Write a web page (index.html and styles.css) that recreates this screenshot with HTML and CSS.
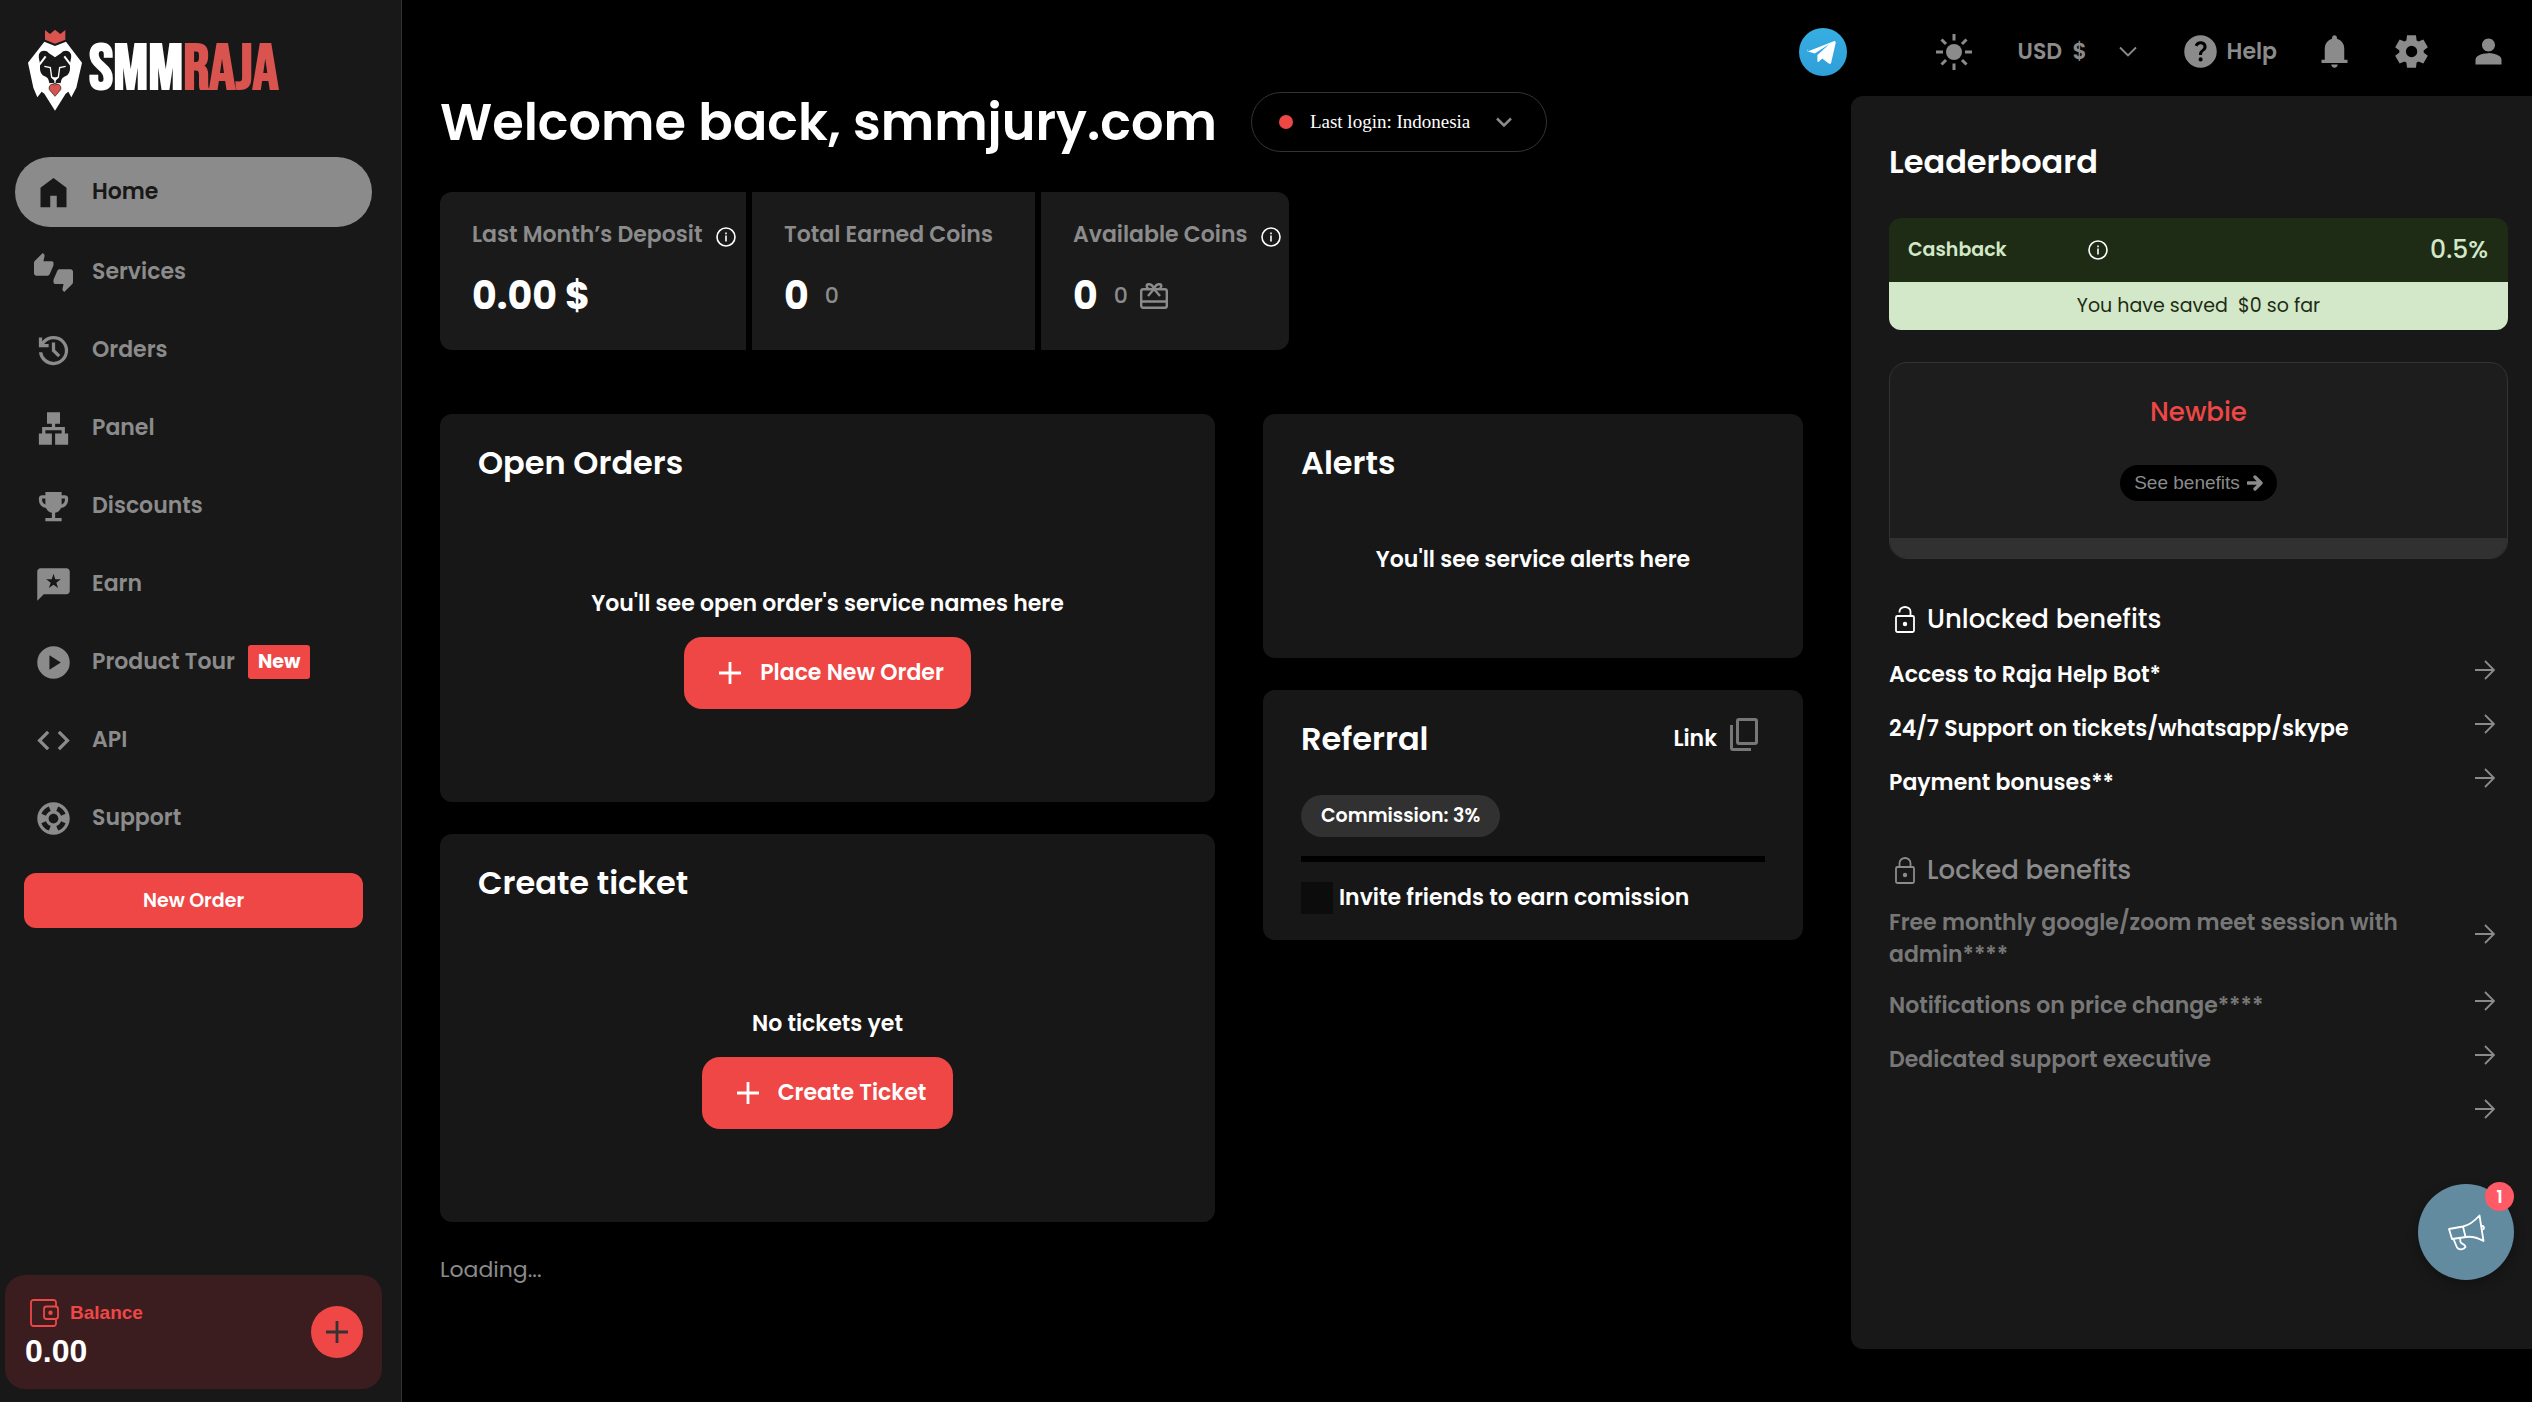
FILE: index.html
```
<!DOCTYPE html>
<html lang="en">
<head>
<meta charset="utf-8">
<title>SMMRAJA</title>
<link rel="stylesheet" href="styles.css">
</head>
<body>
<svg class="sprite" aria-hidden="true">
  <symbol id="info" viewBox="0 0 20 20"><circle cx="10" cy="10" r="9" fill="none" stroke="currentColor" stroke-width="1.6"/><path d="M9.200 8.500h1.600v6H9.200zM9.200 5.500h1.600v1.700H9.200z" fill="currentColor"/></symbol>
  <symbol id="chevron" viewBox="0 0 18 12"><path d="M1 1.500l8 8 8-8" fill="none" stroke="currentColor" stroke-width="1.800"/></symbol>
  <symbol id="plus" viewBox="0 0 24 24"><path d="M12 1v22M1 12h22" stroke="currentColor" stroke-width="2.800" fill="none"/></symbol>
  <symbol id="arrow" viewBox="0 0 20 20"><path d="M0 10h18.500M10 1l9 9-9 9" stroke="currentColor" stroke-width="1.800" fill="none"/></symbol>
</svg>
<div class="app">
  <aside class="sidebar">
    <a class="logo" href="#">
      <svg class="lion" viewBox="84 87 162 244" aria-hidden="true">
        <path fill="#d9534f" d="M135 89l15 12 15-13 16 13 15-12v29l-31 12-30-12z"/>
        <path fill="#fff" d="M133 124l32 13 33-13 48 63-17 75-15 29-9-17-8 6-32 51-32-51-8-6-13 17-12-29-16-75z"/>
        <path fill="#181818" d="M117 162c5-14 23-13 29-4l19 13 19-13c6-9 24-10 29 4 3 14-5 24-3 38 1 15-6 25-14 28-10 4-12 10-14 21-6-2-14-2-17 4-3-6-11-6-17-4-2-11-4-17-14-21-8-3-15-13-14-28 2-14-6-24-3-38z"/>
        <path fill="none" stroke="#fff" stroke-width="6" d="M137 168l-18 24M193 168l18 24"/>
        <path fill="none" stroke="#fff" stroke-width="4" d="M133 198l18 4 4 28 10 7 10-7 4-28 18-4M165 237v12"/>
        <path fill="#fff" d="M153 231h24l-12 12z"/>
        <path fill="#d9534f" stroke="#181818" stroke-width="2" d="M165 288l-17-20c-4-13 10-22 17-13 7-9 21 0 17 13z"/>
      </svg>
      <span class="wordmark">SMM<span class="raja">RAJA</span></span>
    </a>
    <nav class="nav">
      <a class="item active" href="#"><svg class="icon" viewBox="0 0 24 24"><path d="M4 21V9l8-6 8 6v12h-6v-7h-4v7z"/></svg>Home</a>
      <a class="item" href="#"><svg class="icon" viewBox="0 0 24 24"><path d="M12 6c0-.55-.45-1-1-1H5.820l.66-3.180.02-.23c0-.31-.13-.59-.33-.8L5.380 0 .44 4.940C.17 5.210 0 5.590 0 6v6.500c0 .83.67 1.500 1.500 1.500h6.750c.62 0 1.150-.38 1.380-.91l2.260-5.290c.07-.17.11-.36.11-.55V6zm10.500 4h-6.750c-.62 0-1.150.38-1.380.91l-2.260 5.290c-.07.17-.11.36-.11.55V18c0 .55.45 1 1 1h5.180l-.66 3.180-.02.24c0 .31.13.59.33.8l.79.78 4.940-4.940c.27-.27.44-.65.44-1.060v-6.500c0-.83-.67-1.500-1.500-1.500z"/></svg>Services</a>
      <a class="item" href="#"><svg class="icon" viewBox="0 0 24 24"><path d="M12 21q-3.450 0-6.012-2.287T3.050 13H5.100q.35 2.600 2.313 4.300T12 19q2.925 0 4.963-2.037T19 12t-2.037-4.962T12 5q-1.725 0-3.225.8T6.250 8H9v2H3V4h2v2.350q1.275-1.600 3.113-2.475T12 3q1.875 0 3.513.713t2.850 1.924t1.925 2.850T21 12t-.712 3.513t-1.925 2.850t-2.850 1.925T12 21m2.800-4.800L11 12.400V7h2v4.600l3.200 3.200z"/></svg>Orders</a>
      <a class="item" href="#"><svg class="icon" viewBox="0 0 24 24"><path d="M8 2h8v7h-3v2h6v4h2v7h-8v-7h4v-2H7v2h4v7H3v-7h2v-4h6V9H8z"/></svg>Panel</a>
      <a class="item" href="#"><svg class="icon" viewBox="0 0 24 24"><path fill-rule="evenodd" d="M7 21v-2h4v-3.100q-1.225-.275-2.187-1.037T7.400 12.950q-1.875-.225-3.137-1.637T3 8V7q0-.825.588-1.412T5 5h2V3h10v2h2q.825 0 1.413.588T21 7v1q0 1.900-1.263 3.313T16.600 12.950q-.45 1.150-1.412 1.913T13 15.900V19h4v2zm0-10.200V7H5v1q0 .95.55 1.713T7 10.800m10 0q.9-.325 1.450-1.088T19 8V7h-2z"/></svg>Discounts</a>
      <a class="item" href="#"><svg class="icon" viewBox="0 0 24 24"><path fill-rule="evenodd" d="M20 2H4c-1.100 0-2 .9-2 2v18l4-4h14c1.100 0 2-.9 2-2V4c0-1.100-.9-2-2-2zm-5.200 12.200L12 12.100l-2.800 2.100 1.050-3.350L7.500 8.700h3.400L12 5.400l1.100 3.300h3.400l-2.750 2.150z"/></svg>Earn</a>
      <a class="item" href="#"><svg class="icon" viewBox="0 0 24 24"><path fill-rule="evenodd" d="M12 2a10 10 0 1 0 0 20 10 10 0 0 0 0-20zM9.500 16.500v-9l7 4.500z"/></svg>Product Tour<span class="new">New</span></a>
      <a class="item" href="#"><svg class="icon" viewBox="0 0 24 24"><path d="M9.400 16.600 4.800 12l4.600-4.600L8 6l-6 6 6 6zm5.200 0 4.600-4.600-4.600-4.600L16 6l6 6-6 6z"/></svg>API</a>
      <a class="item" href="#"><svg class="icon" viewBox="0 0 24 24"><path fill-rule="evenodd" d="M12 2C6.480 2 2 6.480 2 12s4.480 10 10 10 10-4.480 10-10S17.520 2 12 2zm7.460 7.120-2.780 1.150c-.51-1.360-1.580-2.440-2.950-2.940l1.150-2.780c2.100.8 3.770 2.470 4.580 4.570zM12 15c-1.660 0-3-1.340-3-3s1.340-3 3-3 3 1.340 3 3-1.340 3-3 3zM9.130 4.540l1.170 2.780c-1.380.5-2.470 1.590-2.980 2.970L4.540 9.130c.81-2.110 2.480-3.780 4.590-4.590zM4.540 14.870l2.780-1.150c.51 1.380 1.590 2.460 2.970 2.960l-1.170 2.780c-2.100-.81-3.770-2.480-4.580-4.590zm10.340 4.590-1.150-2.780c1.370-.51 2.450-1.590 2.950-2.970l2.780 1.170c-.81 2.100-2.480 3.770-4.580 4.580z"/></svg>Support</a>
    </nav>
    <button class="btn side-order" type="button">New Order</button>
    <section class="balance">
      <div>
        <div class="balance-label"><svg class="wallet" viewBox="0 0 29 28"><path d="M26 7V3.500A2.500 2.500 0 0 0 23.500 1h-20A2.500 2.500 0 0 0 1 3.500v21A2.500 2.500 0 0 0 3.500 27h20a2.500 2.500 0 0 0 2.500-2.500V20M16.500 7.500h9a2.500 2.500 0 0 1 2.500 2.500v7.500a2.500 2.500 0 0 1-2.500 2.500h-9a2.500 2.500 0 0 1-2.500-2.500V10a2.500 2.500 0 0 1 2.500-2.500z" fill="none" stroke="currentColor" stroke-width="1.800"/><circle cx="20.500" cy="13.700" r="2.200" fill="currentColor"/></svg>Balance</div>
        <div class="balance-value">0.00</div>
      </div>
      <button class="add" type="button" aria-label="Add funds"><svg class="add-icon"><use href="#plus"/></svg></button>
    </section>
  </aside>
  <div class="page">
    <header class="topbar">
      <a class="telegram" href="#" aria-label="Telegram"><svg viewBox="0 0 24 24"><path fill="#fff" d="M4.300 11.700l13.100-5.100c.6-.2 1.100.2.900 1l-2.200 9.700c-.15.7-.6.8-1.200.5L11.600 15.300l-1.600 1.500c-.4.4-.8.2-.8-.3v-3l6-5.500-7.300 4.700-3.400-1c-.6-.2-.6-.6-.2-1z"/></svg></a>
      <button class="tool sun" type="button" aria-label="Theme"><svg viewBox="0 0 36 36" class="sun-icon"><circle cx="18" cy="18" r="8" fill="currentColor"/><path d="M18 0v6.500M18 29.500V36M0 18h7M29 18h7M5.500 5.500l4.500 4.500M26 26l4.500 4.500M5.500 30.500L10 26M26 10l4.500-4.500" stroke="currentColor" stroke-width="3" fill="none"/></svg></button>
      <label class="currency"><select aria-label="Currency"><option>USD&nbsp; $</option></select><svg class="chev"><use href="#chevron"/></svg></label>
      <a class="help" href="#"><svg class="icon" viewBox="0 0 24 24"><path fill-rule="evenodd" d="M12 2a10 10 0 1 0 0 20 10 10 0 0 0 0-20zm.07 16.100a1.250 1.250 0 1 1 0-2.500 1.250 1.250 0 0 1 0 2.500zm.9-3.900h-1.900c0-1.700.3-2.200 1.500-3.250.9-.8 1.250-1.150 1.250-1.900 0-.9-.7-1.550-1.750-1.550-1 0-1.650.6-1.950 1.400l-1.700-.7C8.950 6.700 10.300 5.700 12.050 5.700c2.200 0 3.700 1.350 3.700 3.300 0 1.150-.55 1.900-1.500 2.750-1.050.95-1.280 1.300-1.280 2.450z"/></svg>Help</a>
      <button class="tool" type="button" aria-label="Notifications"><svg class="icon" viewBox="0 0 24 24"><path d="M4 19v-2h2v-7q0-2.075 1.250-3.687T10.500 4.200v-.7q0-.625.438-1.062T12 2t1.063.438T13.500 3.500v.7q2 .5 3.250 2.113T18 10v7h2v2zm8 3q-.825 0-1.412-.587T10 20h4q0 .825-.587 1.413T12 22"/></svg></button>
      <button class="tool" type="button" aria-label="Settings"><svg class="icon" viewBox="0 0 24 24"><path fill-rule="evenodd" d="M9.250 22l-.4-3.200q-.325-.125-.612-.3t-.563-.375L4.700 19.375l-2.750-4.750 2.575-1.950Q4.500 12.500 4.500 12.338v-.675q0-.163.025-.338L1.950 9.375l2.750-4.750 2.975 1.250q.275-.2.575-.375t.6-.3l.4-3.200h5.500l.4 3.200q.325.125.613.3t.562.375l2.975-1.250 2.750 4.750-2.575 1.950q.025.175.025.338v.674q0 .163-.05.338l2.575 1.950-2.750 4.750-2.950-1.250q-.275.2-.575.375t-.6.3l-.4 3.200zm2.800-6.500q1.450 0 2.475-1.025T15.550 12t-1.025-2.475T12.050 8.500q-1.475 0-2.488 1.025T8.550 12t1.013 2.475T12.050 15.500"/></svg></button>
      <button class="tool" type="button" aria-label="Account"><svg class="icon" viewBox="0 0 24 24"><path d="M12 12c2.210 0 4-1.790 4-4s-1.790-4-4-4-4 1.790-4 4 1.790 4 4 4zM4 20v-2.800q0-.85.438-1.562T5.600 14.550q1.550-.775 3.150-1.162T12 13t3.250.388 3.150 1.162q.725.375 1.163 1.088T20 17.200V20z"/></svg></button>
    </header>
    <main class="content">
      <div class="welcome">
        <h1>Welcome back, smmjury.com</h1>
        <button class="login" type="button"><span class="dot"></span>Last login: Indonesia<svg class="chev-bold" viewBox="0 0 16 11"><path d="M1 1.500l7 7 7-7" fill="none" stroke="currentColor" stroke-width="2.500"/></svg></button>
      </div>
      <div class="stats">
        <section class="stat deposit"><div class="stat-label">Last Month’s Deposit<svg class="info"><use href="#info"/></svg></div><div class="stat-value">0.00 $</div></section>
        <section class="stat earned"><div class="stat-label">Total Earned Coins</div><div class="stat-value">0<span class="minor">0</span></div></section>
        <section class="stat available"><div class="stat-label">Available Coins<svg class="info"><use href="#info"/></svg></div><div class="stat-value">0<span class="minor">0</span><svg class="gift" viewBox="0 0 28 26"><rect x="1.200" y="6.200" width="25.600" height="18.600" rx="2" fill="none" stroke="currentColor" stroke-width="2.400"/><path d="M1 18.500h26M8 13l6-7 6 7M14 6c-1-3-3-5-5.500-4.800S6 5 9 6M14 6c1-3 3-5 5.500-4.800S22 5 19 6" fill="none" stroke="currentColor" stroke-width="2.400"/></svg></div></section>
      </div>
      <div class="cards">
        <div class="column">
          <section class="card"><h2>Open Orders</h2><div class="empty tall"><p>You'll see open order's service names here</p><button class="btn big" type="button"><svg class="plus"><use href="#plus"/></svg>Place New Order</button></div></section>
          <section class="card"><h2>Create ticket</h2><div class="empty tall"><p>No tickets yet</p><button class="btn big" type="button"><svg class="plus"><use href="#plus"/></svg>Create Ticket</button></div></section>
        </div>
        <div class="column">
          <section class="card"><h2>Alerts</h2><div class="empty short"><p>You'll see service alerts here</p></div></section>
          <section class="card referral">
            <div class="card-head"><h2>Referral</h2><button class="copy" type="button">Link<svg class="copy-icon" viewBox="0 0 28 33"><rect x="7.500" y="1.500" width="19" height="24" rx="1.500" fill="none" stroke="currentColor" stroke-width="3"/><path d="M1.500 7v23a1.500 1.500 0 0 0 1.500 1.500h18" fill="none" stroke="currentColor" stroke-width="3"/></svg></button></div>
            <span class="chip">Commission: 3%</span>
            <div class="track"></div>
            <div class="invite"><span class="swatch"></span>Invite friends to earn comission</div>
          </section>
        </div>
      </div>
      <p class="loading">Loading...</p>
    </main>
    <aside class="panel">
      <h2>Leaderboard</h2>
      <section class="cashback">
        <div class="cash-top"><span class="cash-label">Cashback</span><svg class="info"><use href="#info"/></svg><span class="cash-rate">0.5%</span></div>
        <div class="cash-saved">You have saved&nbsp; $0 so far</div>
      </section>
      <section class="rank">
        <h3>Newbie</h3>
        <a class="benefits" href="#">See benefits<svg class="bold-arrow" viewBox="0 0 16 16"><path d="M1 8h12M8 2l6 6-6 6" fill="none" stroke="currentColor" stroke-width="3.400" stroke-linecap="round" stroke-linejoin="round"/></svg></a>
        <div class="progress"></div>
      </section>
      <h3 class="list-title"><svg class="lock" viewBox="0 0 20 27"><rect x="1" y="10" width="18" height="16" rx="1.500" fill="none" stroke="currentColor" stroke-width="1.800"/><path d="M4.500 6.500V5.500a5.500 4.500 0 0 1 11 0V10" fill="none" stroke="currentColor" stroke-width="1.800"/><circle cx="10" cy="18" r="2.200" fill="currentColor"/></svg>Unlocked benefits</h3>
      <ul class="list">
        <li><a href="#">Access to Raja Help Bot*<svg class="arrow"><use href="#arrow"/></svg></a></li>
        <li><a href="#">24/7 Support on tickets/whatsapp/skype<svg class="arrow"><use href="#arrow"/></svg></a></li>
        <li><a href="#">Payment bonuses**<svg class="arrow"><use href="#arrow"/></svg></a></li>
      </ul>
      <h3 class="list-title locked-title"><svg class="lock" viewBox="0 0 20 27"><rect x="1" y="10" width="18" height="16" rx="1.500" fill="none" stroke="currentColor" stroke-width="1.800"/><path d="M4.500 10V6a5.500 5 0 0 1 11 0v4" fill="none" stroke="currentColor" stroke-width="1.800"/><circle cx="10" cy="18" r="2.200" fill="currentColor"/></svg>Locked benefits</h3>
      <ul class="list locked">
        <li><a href="#"><span>Free monthly google/zoom meet session with admin****</span><svg class="arrow"><use href="#arrow"/></svg></a></li>
        <li><a href="#">Notifications on price change****<svg class="arrow"><use href="#arrow"/></svg></a></li>
        <li><a href="#">Dedicated support executive<svg class="arrow"><use href="#arrow"/></svg></a></li>
        <li><a href="#" aria-label="More"><span></span><svg class="arrow"><use href="#arrow"/></svg></a></li>
      </ul>
    </aside>
  </div>
</div>
<button class="chat" type="button" aria-label="Announcements"><svg class="horn" viewBox="0 0 38 37"><path d="M2 15l14-2.500C23 11 28 6.500 32.500 1.500L36.500 27c-5.500-3-11-5-17.500-4L5 25zM16 12.500l2.500 10.500M6.500 25l3.500 8.500c2 3 7 2 8.500-.5 0-3-4-2.500-5-5l-.5-4M35 12c2.500 0 2.500 3 .7 3.500" fill="none" stroke="#fff" stroke-width="1.800" stroke-linejoin="round"/></svg><span class="count">1</span></button>
</body>
</html>
```
FILE: styles.css
```
* { box-sizing: border-box; }
body {
  margin: 0;
  background: #000;
  color: #fff;
  font-family: Poppins, Inter, sans-serif;
  font-size: 22px;
  font-weight: 600;
  line-height: 32px;
}
h1, h2, h3, p, ul { margin: 0; padding: 0; }
ul { list-style: none; }
a { color: inherit; text-decoration: none; }
button, select { font: inherit; color: inherit; background: none; border: 0; padding: 0; }
svg { display: block; flex: none; }
.sprite { position: absolute; width: 0; height: 0; }
.icon { width: 39px; height: 39px; fill: currentColor; }
.app { display: grid; grid-template-columns: 402px minmax(0, 1fr); min-height: 100vh; }

.sidebar { display: flex; flex-direction: column; background: #181818; border-right: 1px solid #333; }
.logo { display: flex; align-items: center; gap: 7px; height: 111px; padding: 29px 28px 0; }
.lion { width: 54px; height: 82px; }
.wordmark { font-family: "Bebas Neue", Oswald, "Liberation Sans", sans-serif; font-weight: 700; font-size: 65px; }
.raja { color: #d9534f; }
.nav { display: flex; flex-direction: column; gap: 8px; padding: 46px 18px 0 15px; color: #8b8b8b; }
.item { display: flex; align-items: center; height: 70px; padding-left: 19px; border-radius: 35px; }
.item .icon { margin-right: 19px; }
.item.active { margin: 0 11px 2px 0; background: #8b8b8b; color: #181818; }
.new { margin-left: 13px; padding: 0 10px; border-radius: 3px; background: #ee4745; color: #fff; font-size: 19px; font-weight: 700; line-height: 34px; }
.btn { background: #ee4745; color: #fff; }
.side-order { margin: 20px 38px 0 24px; height: 55px; border-radius: 12px; font-size: 19px; }
.balance { display: flex; align-items: center; justify-content: space-between; margin: auto 19px 13px 5px; height: 114px; padding: 0 19px 0 20px; border-radius: 20px; background: #3b1d1f; font-family: "Liberation Sans", Arial, sans-serif; font-weight: 700; }
.balance-label { display: flex; align-items: center; gap: 11px; padding: 6px 0 0 5px; color: #ee4745; font-size: 19px; }
.wallet { width: 29px; height: 28px; }
.balance-value { font-size: 32px; line-height: 44px; }
.add { display: grid; place-items: center; width: 52px; height: 52px; border-radius: 50%; background: #ee4745; color: #333; }
.add-icon { width: 24px; height: 24px; }

.page { display: grid; grid-template-columns: minmax(0, 1fr) 681px; grid-template-rows: 92px 1fr; }
.topbar { grid-column: 1 / -1; display: flex; align-items: center; justify-content: flex-end; padding: 0 24px 0 0; height: 103px; color: #8b8b8b; }
.telegram { width: 48px; height: 48px; margin-right: 89px; border-radius: 50%; background: linear-gradient(#37aee2, #2f9fd9); }
.tool { margin-left: 38px; }
.tool.sun { margin-left: 0; }
.sun-icon { width: 36px; height: 36px; }
.currency { display: flex; align-items: center; gap: 31px; margin: 0 44px 0 46px; }
.currency select { appearance: none; outline: 0; }
.chev { width: 18px; height: 12px; color: #8b8b8b; }
.help { display: flex; align-items: center; gap: 7px; }

.content { padding: 0 48px 0 38px; }
.welcome { display: flex; align-items: center; gap: 34px; height: 60px; }
h1 { font-size: 51px; font-weight: 600; line-height: 58px; white-space: nowrap; }
.login { display: flex; align-items: center; height: 60px; padding: 0 34px 0 27px; border: 1px solid #333; border-radius: 30px; font-family: "Liberation Serif", serif; font-size: 19px; font-weight: 400; white-space: nowrap; }
.dot { width: 14px; height: 14px; margin-right: 17px; border-radius: 50%; background: #ee4745; }
.chev-bold { width: 16px; height: 11px; margin-left: 26px; color: #8b8b8b; }
.stats { display: flex; gap: 6px; margin-top: 40px; }
.stat { height: 158px; padding: 27px 0 0 32px; background: #1a1a1a; }
.deposit { width: 306px; border-radius: 12px 0 0 12px; }
.earned { width: 283px; }
.available { width: 248px; border-radius: 0 12px 12px 0; }
.stat-label { display: flex; align-items: center; gap: 14px; color: #8b8b8b; white-space: nowrap; }
.info { width: 20px; height: 20px; color: #fff; }
.stat-label .info { margin-top: 4px; }
.stat-value { display: flex; align-items: center; margin-top: 23px; font-size: 38px; font-weight: 700; line-height: 44px; }
.minor { margin: 0 12px 0 16px; color: #8b8b8b; font-size: 22px; font-weight: 500; }
.gift { width: 28px; height: 26px; color: #8b8b8b; }

.cards { display: grid; grid-template-columns: 775fr 540fr; gap: 48px; margin-top: 64px; align-items: start; }
.column { display: grid; gap: 32px; }
.card { padding: 30px 38px 26px; border-radius: 12px; background: #171717; }
h2 { font-size: 32px; font-weight: 600; line-height: 38px; }
.empty { display: flex; flex-direction: column; align-items: center; justify-content: center; gap: 17px; }
.tall { min-height: 294px; padding-top: 39px; }
.short { min-height: 150px; padding-top: 6px; }
.big { display: flex; align-items: center; gap: 18px; height: 72px; padding: 0 27px 0 34px; border-radius: 18px; }
.plus { width: 24px; height: 24px; }
.card-head { display: flex; align-items: center; justify-content: space-between; height: 38px; }
.copy { display: flex; align-items: center; gap: 13px; padding-right: 7px; }
.copy-icon { width: 28px; height: 33px; margin-bottom: 9px; color: #777; }
.chip { display: inline-block; margin-top: 37px; padding: 0 20px; border-radius: 21px; background: #313131; font-size: 19px; line-height: 42px; }
.track { height: 6px; margin-top: 19px; background: #000; }
.invite { display: flex; align-items: center; gap: 6px; margin-top: 20px; }
.swatch { width: 32px; height: 32px; background: #0c0c0c; }
.loading { margin-top: 32px; color: #8b8b8b; font-weight: 400; }

.panel { margin: 4px 0 53px; padding: 47px 24px 0 38px; border-radius: 12px 0 0 12px; background: #181818; }
.cashback { margin-top: 37px; overflow: hidden; border-radius: 12px; }
.cash-top { display: flex; align-items: center; height: 64px; padding: 0 20px 0 19px; background: #1e2c15; color: #d3e8c8; }
.cash-label { width: 180px; font-size: 19px; }
.cash-rate { margin-left: auto; font-size: 25px; font-weight: 500; }
.cash-saved { background: #d3e8c8; color: #1e2c15; font-size: 19px; font-weight: 400; line-height: 48px; text-align: center; }
.rank { display: flex; flex-direction: column; align-items: center; margin-top: 32px; padding-top: 33px; border: 1px solid #333; border-radius: 18px; background: #1d1d1d; overflow: hidden; }
.rank h3 { color: #ee4745; font-size: 26px; font-weight: 500; }
.benefits { display: flex; align-items: center; gap: 7px; height: 36px; margin-top: 37px; padding: 0 14px; border-radius: 18px; background: #000; color: #8b8b8b; font-family: "Liberation Sans", Arial, sans-serif; font-size: 19px; font-weight: 400; }
.bold-arrow { width: 16px; height: 16px; }
.progress { align-self: stretch; height: 20px; margin-top: 37px; background: #313131; }
.list-title { display: flex; align-items: center; gap: 12px; margin-top: 44px; padding-left: 6px; font-size: 26px; font-weight: 500; }
.lock { width: 20px; height: 27px; }
.list { display: grid; gap: 16px; margin-top: 21px; }
.list a { display: flex; align-items: center; justify-content: space-between; gap: 60px; min-height: 38px; padding-right: 13px; }
.arrow { width: 20px; height: 20px; margin-bottom: 10px; color: #8b8b8b; }
.locked-title { margin-top: 52px; color: #8b8b8b; }
.locked { color: #777; }

.chat { position: fixed; right: 18px; bottom: 122px; display: grid; place-items: center; width: 96px; height: 96px; border-radius: 50%; background: #628ba0; box-shadow: 0 4px 12px rgba(0, 0, 0, 0.3); }
.horn { width: 38px; height: 37px; }
.count { position: absolute; top: -2px; right: 0; width: 29px; height: 29px; border-radius: 50%; background: #ff5a65; font-size: 18px; line-height: 29px; }
```
